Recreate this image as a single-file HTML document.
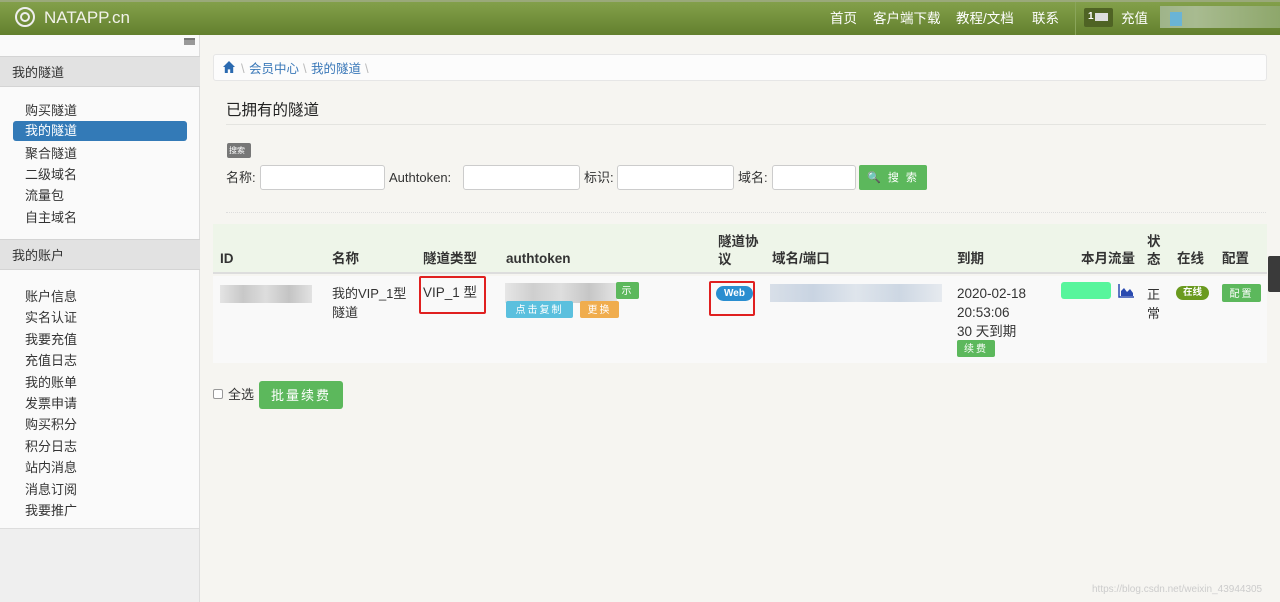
<!DOCTYPE html>
<html><head><meta charset="utf-8"><style>
*{margin:0;padding:0;box-sizing:border-box}
body{width:1280px;height:602px;overflow:hidden;background:#f6f5f1;font-family:"Liberation Sans","Noto Sans CJK SC",sans-serif;font-size:13px;color:#333;position:relative;line-height:1.15}
.a{position:absolute}
.hdr{left:0;top:0;width:1280px;height:35px;background:linear-gradient(#83a04a,#63802e);border-top:2px solid #9aa97a}
.nav{color:#fff;font-size:13.5px;top:11px}
.side{left:0;top:35px;width:200px;height:567px;background:#fafafa;border-right:1px solid #ddd}
.sh{left:0;width:200px;height:31px;background:#e2e2e2;border-top:1px solid #d4d4d4;border-bottom:1px solid #d4d4d4;padding:9px 12px 0;font-size:13px;color:#333}
.si{left:25px;font-size:13px;color:#333}
.btn{color:#fff;border-radius:2px;font-size:10px;text-align:center;letter-spacing:2px}
input.i{position:absolute;height:25px;border:1px solid #ccc;border-radius:3px;background:#fff}
.th{font-weight:bold;font-size:13.5px;color:#333}
.lb{top:171px}
</style></head><body>
<div class="a hdr"></div>
<div class="a" style="left:15px;top:7px;width:20px;height:20px;border-radius:50%;border:2px solid #eee;"></div>
<div class="a" style="left:20px;top:12px;width:10px;height:10px;border-radius:50%;border:2px solid #eee;"></div>
<div class="a" style="left:44px;top:8px;font-size:17px;color:#f2f2ea">NATAPP.cn</div>
<div class="a nav" style="left:830px">首页</div>
<div class="a nav" style="left:873px">客户端下载</div>
<div class="a nav" style="left:956px">教程/文档</div>
<div class="a nav" style="left:1032px">联系</div>
<div class="a" style="left:1075px;top:2px;width:1px;height:33px;background:#8aa55a"></div>
<div class="a" style="left:1084px;top:8px;width:29px;height:19px;background:#4f6324;border-radius:2px"></div>
<div class="a" style="left:1088px;top:11px;color:#fff;font-size:10px;font-weight:bold">1</div>
<div class="a" style="left:1095px;top:13px;width:13px;height:8px;background:#ddd"></div>
<div class="a nav" style="left:1121px">充值</div>
<div class="a" style="left:1160px;top:6px;width:120px;height:22px;background:linear-gradient(90deg,#9fb48a,#a8bb90 30%,#8ea76b)"></div>
<div class="a" style="left:1170px;top:12px;width:12px;height:14px;background:#6ab4d6"></div>

<div class="a side"></div>
<div class="a" style="left:184px;top:38px;width:11px;height:7px;background:#999;border-top:2px solid #777"></div>
<div class="a sh" style="top:56px">我的隧道</div>
<div class="a si" style="top:104px">购买隧道</div>
<div class="a" style="left:13px;top:121px;width:174px;height:20px;background:#337ab7;border-radius:3px"></div>
<div class="a si" style="top:124px;color:#fff">我的隧道</div>
<div class="a si" style="top:147px">聚合隧道</div>
<div class="a si" style="top:168px">二级域名</div>
<div class="a si" style="top:189px">流量包</div>
<div class="a si" style="top:211px">自主域名</div>
<div class="a sh" style="top:239px">我的账户</div>
<div class="a si" style="top:286px;line-height:21.4px">账户信息<br>实名认证<br>我要充值<br>充值日志<br>我的账单<br>发票申请<br>购买积分<br>积分日志<br>站内消息<br>消息订阅<br>我要推广</div>
<div class="a" style="left:0;top:528px;width:200px;height:74px;background:#efefef;border-top:1px solid #ddd;border-right:1px solid #ddd"></div>

<div class="a" style="left:213px;top:54px;width:1054px;height:27px;background:#fcfcfc;border:1px solid #e6e6e6;border-radius:3px"></div>
<div class="a" style="left:223px;top:61px;width:12px;height:12px;background:#2a6ab0;clip-path:polygon(50% 0,100% 50%,85% 50%,85% 100%,60% 100%,60% 70%,40% 70%,40% 100%,15% 100%,15% 50%,0 50%)"></div>
<div class="a" style="left:241px;top:62px;color:#bbb">\</div>
<div class="a" style="left:249px;top:62px;color:#3a78b8;font-size:12.5px">会员中心</div>
<div class="a" style="left:303px;top:62px;color:#bbb">\</div>
<div class="a" style="left:311px;top:62px;color:#3a78b8;font-size:12.5px">我的隧道</div>
<div class="a" style="left:365px;top:62px;color:#bbb">\</div>
<div class="a" style="left:226px;top:102px;font-size:15.5px;color:#222">已拥有的隧道</div>
<div class="a" style="left:226px;top:124px;width:1040px;height:1px;background:#e4e4e0"></div>
<div class="a" style="left:227px;top:143px;width:24px;height:15px;background:#777;border-radius:2px;color:#fff;font-size:8px;padding:3px 2px 0">搜索</div>
<div class="a lb" style="left:226px">名称:</div>
<input class="i" style="left:260px;top:165px;width:125px">
<div class="a lb" style="left:389px">Authtoken:</div>
<input class="i" style="left:463px;top:165px;width:117px">
<div class="a lb" style="left:584px">标识:</div>
<input class="i" style="left:617px;top:165px;width:117px">
<div class="a lb" style="left:738px">域名:</div>
<input class="i" style="left:772px;top:165px;width:84px">
<div class="a btn" style="left:859px;top:165px;width:68px;height:25px;background:#5cb85c;font-size:11px;padding-top:7px">🔍 搜 索</div>
<div class="a" style="left:226px;top:212px;width:1040px;border-top:1px dotted #ddd"></div>

<div class="a" style="left:213px;top:224px;width:1054px;height:50px;background:#eef5e9;border-bottom:2px solid #ddd"></div>
<div class="a" style="left:213px;top:276px;width:1054px;height:87px;background:#f9f9f9"></div>
<div class="a th" style="left:220px;top:251px">ID</div>
<div class="a th" style="left:332px;top:251px">名称</div>
<div class="a th" style="left:423px;top:251px">隧道类型</div>
<div class="a th" style="left:506px;top:251px">authtoken</div>
<div class="a th" style="left:718px;top:233px;line-height:18px">隧道协<br>议</div>
<div class="a th" style="left:772px;top:251px">域名/端口</div>
<div class="a th" style="left:957px;top:251px">到期</div>
<div class="a th" style="left:1081px;top:251px">本月流量</div>
<div class="a th" style="left:1147px;top:233px;line-height:18px">状<br>态</div>
<div class="a th" style="left:1177px;top:251px">在线</div>
<div class="a th" style="left:1222px;top:251px">配置</div>

<div class="a" style="left:220px;top:285px;width:92px;height:18px;background:linear-gradient(90deg,#e4e4e4,#c8c8c8,#ddd,#c4c4c4,#e2e2e2)"></div>
<div class="a" style="left:332px;top:284px;line-height:19px">我的VIP_1型<br>隧道</div>
<div class="a" style="left:423px;top:285px;font-size:13.5px">VIP_1 型</div>
<div class="a" style="left:419px;top:276px;width:67px;height:38px;border:2px solid #e02020;border-radius:2px"></div>
<div class="a" style="left:505px;top:283px;width:112px;height:20px;background:linear-gradient(90deg,#e6e6e6,#cfcfcf,#dedede,#c6c6c6,#e4e4e4)"></div>
<div class="a btn" style="left:616px;top:282px;width:23px;height:17px;background:#5cb85c;padding-top:4px">示</div>
<div class="a btn" style="left:506px;top:301px;width:67px;height:17px;background:#5bc0de;padding-top:4px">点击复制</div>
<div class="a btn" style="left:580px;top:301px;width:39px;height:17px;background:#f0ad4e;padding-top:4px">更换</div>
<div class="a" style="left:716px;top:286px;width:37px;height:15px;background:#2a8ed0;border-radius:8px;color:#fff;font-size:10px;font-weight:bold;text-align:center;line-height:15px">Web</div>
<div class="a" style="left:709px;top:281px;width:46px;height:35px;border:2px solid #e02020;border-radius:2px"></div>
<div class="a" style="left:770px;top:284px;width:172px;height:18px;background:linear-gradient(90deg,#d8dfe8,#c9d4e2,#dfe5ec,#cdd7e3,#e6eaef)"></div>
<div class="a" style="left:957px;top:284px;line-height:19px;font-size:13.5px">2020-02-18<br>20:53:06<br>30 天到期</div>
<div class="a btn" style="left:957px;top:340px;width:38px;height:17px;background:#5cb85c;padding-top:4px">续费</div>
<div class="a" style="left:1061px;top:282px;width:50px;height:17px;background:#57f59c;border-radius:3px"></div>
<svg class="a" style="left:1118px;top:284px" width="17" height="14"><path d="M1 0V13H16" stroke="#2a4ab0" stroke-width="1.5" fill="none"/><path d="M3 12V7L6 4L9 8L12 5L15 9V12Z" fill="#2a4ab0"/></svg>
<div class="a" style="left:1147px;top:285px;line-height:19px">正<br>常</div>
<div class="a" style="left:1176px;top:286px;width:33px;height:14px;background:#6a9a1f;border-radius:7px;color:#fff;font-size:9.5px;font-weight:bold;text-align:center;line-height:14px">在线</div>
<div class="a btn" style="left:1222px;top:284px;width:39px;height:18px;background:#5cb85c;padding-top:5px">配置</div>
<div class="a" style="left:1268px;top:256px;width:12px;height:36px;background:#3a3a3a;border-radius:2px 0 0 2px"></div>

<div class="a" style="left:213px;top:389px;width:10px;height:10px;border:1px solid #999;border-radius:2px;background:#fff"></div>
<div class="a" style="left:228px;top:388px">全选</div>
<div class="a btn" style="left:259px;top:381px;width:84px;height:28px;background:#5cb85c;font-size:13px;padding-top:8px;border-radius:3px">批量续费</div>
<div class="a" style="left:1092px;top:584px;color:#ccc;font-size:10px">https://blog.csdn.net/weixin_43944305</div>
</body></html>
